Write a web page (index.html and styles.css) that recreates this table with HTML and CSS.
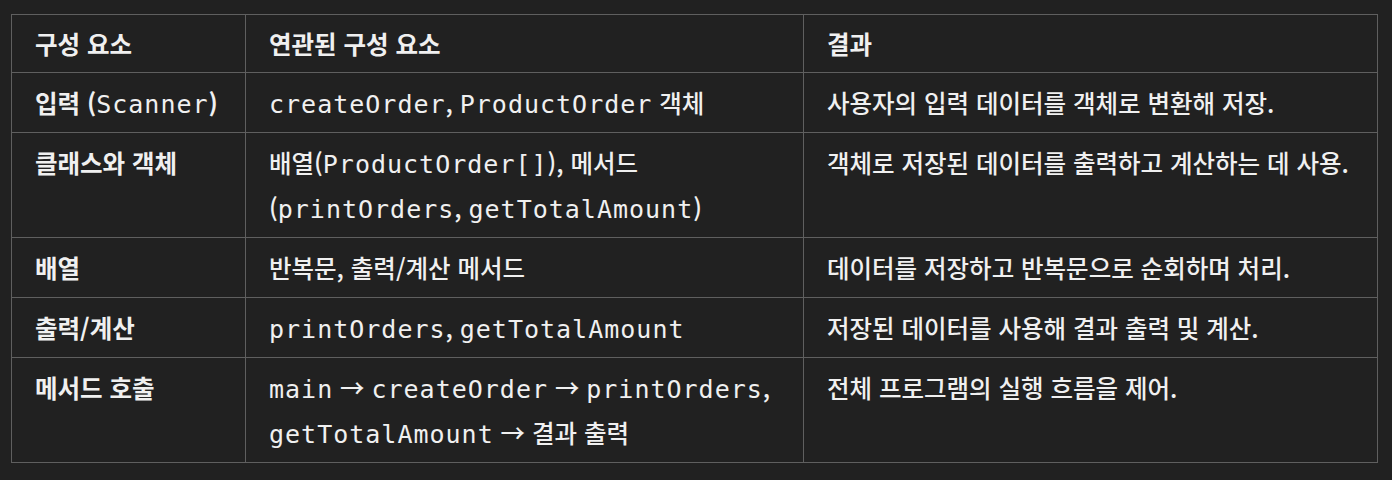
FILE: index.html
```html
<!DOCTYPE html>
<html lang="ko">
<head>
<meta charset="utf-8">
<link rel="stylesheet" href="styles.css">
</head>
<body>
<div class="wrap">
<table class="grid">
  <colgroup>
    <col class="c1"><col class="c2"><col class="c3">
  </colgroup>
  <thead>
    <tr class="head"><th>구성 요소</th><th>연관된 구성 요소</th><th>결과</th></tr>
  </thead>
  <tbody>
    <tr><td><strong>입력 (<code>Scanner</code>)</strong></td><td><code>createOrder</code>, <code>ProductOrder</code> 객체</td><td>사용자의 입력 데이터를 객체로 변환해 저장.</td></tr>
    <tr><td><strong>클래스와 객체</strong></td><td>배열(<code>ProductOrder[]</code>), 메서드<br>(<code>printOrders</code>, <code>getTotalAmount</code>)</td><td>객체로 저장된 데이터를 출력하고 계산하는 데 사용.</td></tr>
    <tr><td><strong>배열</strong></td><td>반복문, 출력/계산 메서드</td><td>데이터를 저장하고 반복문으로 순회하며 처리.</td></tr>
    <tr><td><strong>출력/계산</strong></td><td><code>printOrders</code>, <code>getTotalAmount</code></td><td>저장된 데이터를 사용해 결과 출력 및 계산.</td></tr>
    <tr><td><strong>메서드 호출</strong></td><td><code>main</code> → <code>createOrder</code> → <code>printOrders</code>,<br><code>getTotalAmount</code> → 결과 출력</td><td>전체 프로그램의 실행 흐름을 제어.</td></tr>
  </tbody>
</table>
</div>
</body>
</html>
```

FILE: styles.css
```css
html, body {
  margin: 0;
  background: #212121;
}
body {
  color: #f0f0f0;
  font-family: "Noto Sans CJK KR", "Noto Sans", sans-serif;
  font-size: 24.5px;
}
.wrap {
  padding: 14px 0 0 11px;
}
.grid {
  border-collapse: collapse;
  table-layout: fixed;
  width: 1366px;
}
.c1 { width: 234px; }
.c2 { width: 558px; }
.c3 { width: 574px; }
.grid th, .grid td {
  border: 1px solid #5f5f5f;
  text-align: left;
  vertical-align: top;
  line-height: 45px;
  padding: 7px 20px 7px 23px;
  white-space: nowrap;
  font-weight: 500;
}
.grid th {
  font-weight: 700;
  padding-top: 6px;
  padding-bottom: 6px;
}
strong {
  font-weight: 700;
}
code {
  font-family: "DejaVu Sans Mono", "Noto Sans CJK KR", monospace;
  font-size: 25px;
  font-weight: 400;
  letter-spacing: 1px;
  line-height: 1;
}
```
